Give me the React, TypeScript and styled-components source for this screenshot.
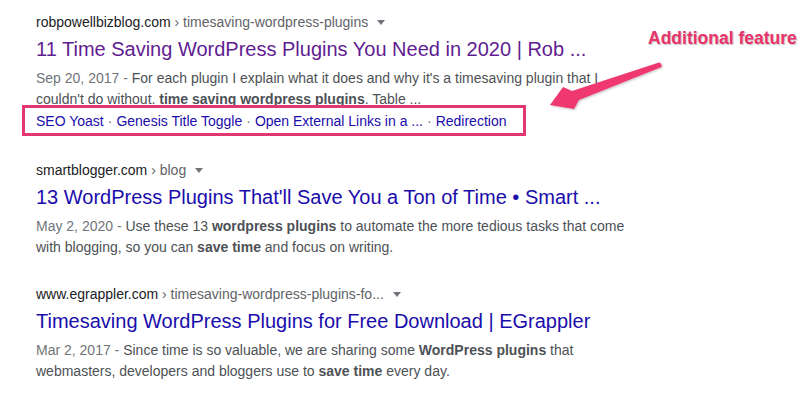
import React from "react";
import styled, { createGlobalStyle } from "styled-components";

const Global = createGlobalStyle`
  html, body { margin: 0; padding: 0; background: #fff; }
  body { font-family: Arial, "Liberation Sans", sans-serif; width: 810px; height: 404px; overflow: hidden; }
`;

const Page = styled.div`
  position: relative;
  width: 810px;
  height: 404px;
  box-sizing: border-box;
  padding: 13px 0 0 36px;
  display: flex;
  flex-direction: column;
`;

const Result = styled.div<{ $gap: number }>`
  display: flex;
  flex-direction: column;
  margin-bottom: ${(p) => p.$gap}px;
`;

const Crumb = styled.div`
  font-size: 14px;
  line-height: 18px;
  color: #202124;
  display: flex;
  align-items: center;
  white-space: nowrap;
`;

const CrumbPath = styled.span`
  color: #5f6368;
`;

const Caret = styled.span`
  display: inline-block;
  width: 0;
  height: 0;
  margin-left: 9px;
  border-left: 4px solid transparent;
  border-right: 4px solid transparent;
  border-top: 5px solid #70757a;
`;

const Title = styled.a<{ $visited?: boolean }>`
  display: block;
  font-size: 20px;
  line-height: 26px;
  margin-top: 5px;
  color: ${(p) => (p.$visited ? "#5f1d91" : "#1a0dab")};
  text-decoration: none;
  white-space: nowrap;
`;

const Snippet = styled.div`
  font-size: 14px;
  line-height: 21px;
  color: #4d5156;
  margin-top: 6px;
  white-space: nowrap;
  b { color: #4d5156; font-weight: bold; }
`;

const DateText = styled.span`
  color: #70757a;
`;

const Sitelinks = styled.div`
  position: relative;
  margin: -5px 0 0 -14px;
  align-self: flex-start;
  border: 3px solid #e2386f;
  padding: 4px 17px 3px 11px;
  font-size: 14px;
  line-height: 18px;
  white-space: nowrap;
  display: flex;
  align-items: center;
`;

const Sitelink = styled.a`
  color: #1a0dab;
  text-decoration: none;
`;

const Dot = styled.span`
  color: #70757a;
  margin: 0 4px;
`;

const Annotation = styled.div`
  position: absolute;
  left: 648px;
  top: 28px;
  font-size: 17.5px;
  font-weight: bold;
  color: #e8336d;
  text-shadow: 1px 1px 1px rgba(0, 0, 0, 0.25), -1px -1px 0 #fff;
  white-space: nowrap;
`;

const ArrowSvg = styled.svg`
  position: absolute;
  left: 540px;
  top: 55px;
  overflow: visible;
`;

const links = ["SEO Yoast", "Genesis Title Toggle", "Open External Links in a ...", "Redirection"];

export default function App() {
  return (
    <>
      <Global />
      <Page>
        <Result $gap={25}>
          <Crumb>
            robpowellbizblog.com<CrumbPath>&nbsp;› timesaving-wordpress-plugins</CrumbPath>
            <Caret />
          </Crumb>
          <Title $visited>11 Time Saving WordPress Plugins You Need in 2020 | Rob ...</Title>
          <Snippet>
            <DateText>Sep 20, 2017 - </DateText>For each plugin I explain what it does and why it's a timesaving plugin that I
            <br />
            couldn't do without. <b>time saving wordpress plugins</b>. Table ...
          </Snippet>
          <Sitelinks>
            {links.map((l, i) => (
              <React.Fragment key={l}>
                {i > 0 && <Dot>·</Dot>}
                <Sitelink>{l}</Sitelink>
              </React.Fragment>
            ))}
          </Sitelinks>
        </Result>
        <Result $gap={27}>
          <Crumb>
            smartblogger.com<CrumbPath>&nbsp;› blog</CrumbPath>
            <Caret />
          </Crumb>
          <Title>13 WordPress Plugins That'll Save You a Ton of Time • Smart ...</Title>
          <Snippet>
            <DateText>May 2, 2020 - </DateText>Use these 13 <b>wordpress plugins</b> to automate the more tedious tasks that come
            <br />
            with blogging, so you can <b>save time</b> and focus on writing.
          </Snippet>
        </Result>
        <Result $gap={0}>
          <Crumb>
            www.egrappler.com<CrumbPath>&nbsp;› timesaving-wordpress-plugins-fo...</CrumbPath>
            <Caret />
          </Crumb>
          <Title>Timesaving WordPress Plugins for Free Download | EGrappler</Title>
          <Snippet>
            <DateText>Mar 2, 2017 - </DateText>Since time is so valuable, we are sharing some <b>WordPress plugins</b> that
            <br />
            webmasters, developers and bloggers use to <b>save time</b> every day.
          </Snippet>
        </Result>
        <Annotation>Additional feature</Annotation>
        <ArrowSvg width="130" height="60" viewBox="0 0 130 60">
          <defs>
            <filter id="sh" x="-20%" y="-20%" width="140%" height="140%">
              <feDropShadow dx="1" dy="1" stdDeviation="1" floodColor="#000" floodOpacity="0.25" />
            </filter>
          </defs>
          <g filter="url(#sh)" fill="#f0386f">
            <path d="M10 50 L23 32 L32 36 L119 7.5 Q122 8 121.5 12 L39 45 L34 54 Z" />
          </g>
        </ArrowSvg>
      </Page>
    </>
  );
}
